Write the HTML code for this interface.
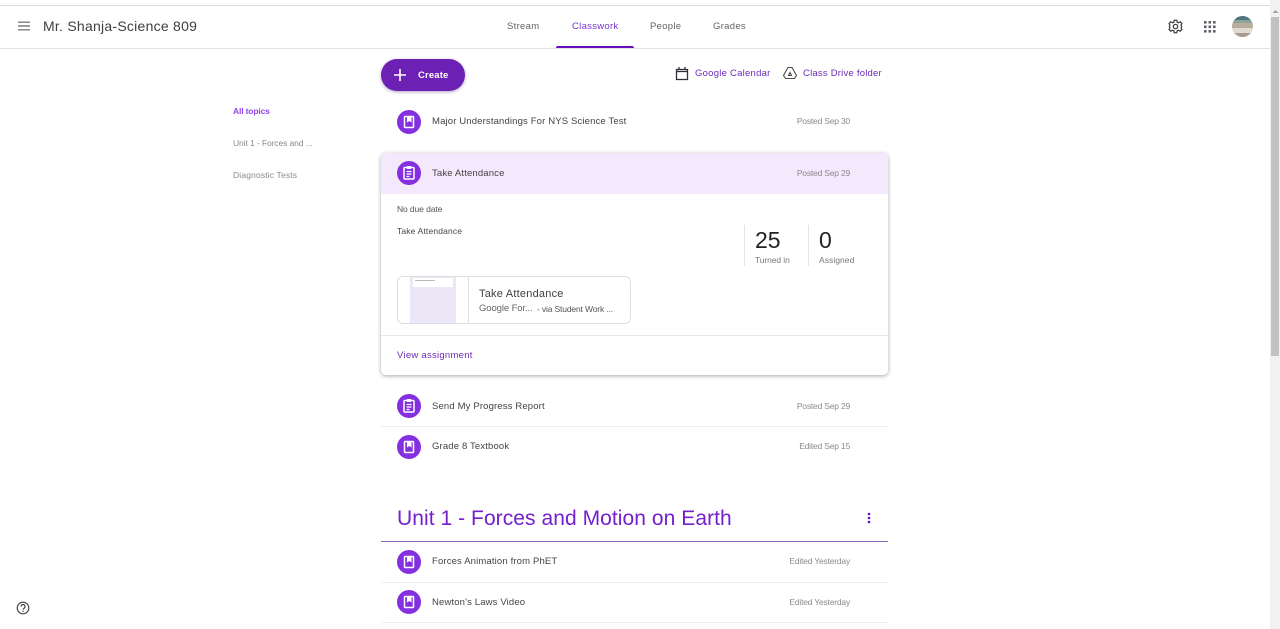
<!DOCTYPE html>
<html><head><meta charset="utf-8"><style>
html,body{margin:0;padding:0;background:#fff;width:1280px;height:629px;overflow:hidden;font-family:"Liberation Sans",sans-serif}
.t{position:absolute;white-space:nowrap;line-height:14px}
.b{position:absolute;background:#e5e5e5}
.ic{position:absolute;width:24px;height:24px;left:397px;border-radius:50%;background:#8430e0}
.ic svg{position:absolute;left:0;top:0}
.title{font-size:9.5px;color:#444;left:432px;letter-spacing:.15px}
.date{font-size:8.5px;color:#8a8a8a;letter-spacing:-.2px;text-align:right;right:430px}
.tab{font-size:9.5px;color:#5f6368;letter-spacing:.3px}
</style></head><body>
<div class="b" style="left:0;top:5px;width:1270px;height:1px;background:#dcdcdc"></div>
<div class="b" style="left:0;top:48px;width:1270px;height:1px;background:#e0e0e0"></div>
<svg style="position:absolute;left:18px;top:21px" width="12" height="10"><path d="M0 1.200h12M0 5h12M0 8.800h12" stroke="#5f6368" stroke-width="1.200"/></svg>
<div class="t" style="left:43px;top:18px;font-size:14px;line-height:17px;color:#3c4043;letter-spacing:.25px">Mr. Shanja-Science 809</div>
<div class="t tab" style="left:507px;top:20px">Stream</div>
<div class="t tab" style="left:572px;top:20px;color:#7b35d0">Classwork</div>
<div class="t tab" style="left:650px;top:20px">People</div>
<div class="t tab" style="left:713px;top:20px">Grades</div>
<div class="b" style="left:556px;top:46px;width:78px;height:2px;background:#6a0fc0;border-radius:2px 2px 0 0"></div>
<svg style="position:absolute;left:1168px;top:19px" width="15" height="15" viewBox="0 0 24 24"><path d="M10 2h4l.6 3 2.300 1 2.600-1.600 2.800 2.800L20.900 9.800l1 2.200v0l-1 2.200 1.400 2.600-2.800 2.800-2.600-1.600-2.300 1-.6 3h-4l-.6-3-2.300-1-2.600 1.600-2.800-2.800 1.400-2.600-1-2.200 1-2.200-1.400-2.600L4.500 4.400l2.600 1.600 2.300-1z" fill="none" stroke="#3c4043" stroke-width="2"/><circle cx="12" cy="12" r="3.500" fill="none" stroke="#3c4043" stroke-width="2"/></svg>
<svg style="position:absolute;left:1204px;top:21px" width="12" height="12" fill="#5f6368"><rect x="0" y="0" width="2.600" height="2.600"/><rect x="4.500" y="0" width="2.600" height="2.600"/><rect x="9" y="0" width="2.600" height="2.600"/><rect x="0" y="4.500" width="2.600" height="2.600"/><rect x="4.500" y="4.500" width="2.600" height="2.600"/><rect x="9" y="4.500" width="2.600" height="2.600"/><rect x="0" y="9" width="2.600" height="2.600"/><rect x="4.500" y="9" width="2.600" height="2.600"/><rect x="9" y="9" width="2.600" height="2.600"/></svg>
<div style="position:absolute;left:1232px;top:16px;width:21px;height:21px;border-radius:50%;overflow:hidden;background:#cfc8bc"><div style="height:4px;background:#4f7580"></div><div style="height:3px;background:#8fa39a"></div><div style="height:5px;background:#b8ad9c"></div><div style="height:5px;background:#e0dbd2"></div><div style="height:4px;background:#a89c8c"></div></div>
<div style="position:absolute;left:1270px;top:0;width:10px;height:629px;background:#f1f1f1"></div>
<div style="position:absolute;left:1271px;top:17px;width:8px;height:339px;background:#c1c1c1"></div>
<svg style="position:absolute;left:1272px;top:9px" width="7" height="5"><path d="M0.500 4L3.500 1 6.500 4z" fill="#a0a0a0"/></svg>
<svg style="position:absolute;left:16px;top:601px" width="14" height="14" viewBox="0 0 14 14"><circle cx="7" cy="7" r="5.800" fill="none" stroke="#3c4043" stroke-width="1.100"/><path d="M5 5.600a2 2 0 1 1 3 1.700c-.7.400-1 .8-1 1.500" fill="none" stroke="#3c4043" stroke-width="1.100"/><circle cx="7" cy="10.300" r=".7" fill="#3c4043"/></svg>
<div class="t" style="left:233px;top:104px;font-size:8.500px;color:#8f45ea;letter-spacing:-.15px;font-weight:bold">All topics</div>
<div class="t" style="left:233px;top:136px;font-size:8.500px;color:#8a8a8a;letter-spacing:-.1px">Unit 1 - Forces and ...</div>
<div class="t" style="left:233px;top:168px;font-size:8.500px;color:#8a8a8a;letter-spacing:.15px">Diagnostic Tests</div>
<div style="position:absolute;left:381px;top:59px;width:84px;height:32px;border-radius:16px;background:#6d20b4;box-shadow:0 1px 3px rgba(60,20,120,.4)"></div>
<svg style="position:absolute;left:393px;top:68px" width="14" height="14"><path d="M7 1v12M1 7h12" stroke="#fff" stroke-width="1.600"/></svg>
<div class="t" style="left:418px;top:69px;font-size:9.500px;color:#fff;font-weight:bold;letter-spacing:.15px">Create</div>
<svg style="position:absolute;left:675px;top:66px" width="14" height="15"><path d="M1.500 3.500h11v10h-11zM1.500 5.500h11M4 1v2.500M10 1v2.500" fill="none" stroke="#2a2f3a" stroke-width="1.300"/></svg>
<div class="t" style="left:695px;top:67px;font-size:9.500px;color:#6b2bb8;letter-spacing:.25px">Google Calendar</div>
<svg style="position:absolute;left:783px;top:66px" width="14" height="14"><path d="M5 1.500h4l4.500 8-2 3h-9l-2-3zM5.500 9.500L7 6.500l1.500 3z" fill="none" stroke="#4a4a4a" stroke-width="1.100"/></svg>
<div class="t" style="left:803px;top:67px;font-size:9.500px;color:#6b2bb8;letter-spacing:.22px">Class Drive folder</div>

<div class="ic" style="top:110px"><svg width="24" height="24"><rect x="7.500" y="6.500" width="9" height="11" rx=".8" fill="none" stroke="#fff" stroke-width="1.500"/><path d="M10 6.500h4.500v6l-2.200-1.500L10 12.500z" fill="#fff"/></svg></div>
<div class="t title" style="top:115px">Major Understandings For NYS Science Test</div>
<div class="t date" style="top:114px">Posted Sep 30</div>

<div style="position:absolute;left:381px;top:153px;width:507px;height:222px;background:#fff;border-radius:5px;box-shadow:0 1px 4px rgba(0,0,0,.35)"></div>
<div style="position:absolute;left:381px;top:153px;width:507px;height:41px;background:#f3e8fc;border-radius:5px 5px 0 0"></div>
<div class="ic" style="top:161px"><svg width="24" height="24"><rect x="7" y="6.500" width="10" height="11.500" rx="1" fill="none" stroke="#fff" stroke-width="1.500"/><path d="M10 5h4v3h-4z" fill="#fff"/><path d="M9.500 10.500h5M9.500 13h5M9.500 15.500h3" stroke="#fff" stroke-width="1.300"/></svg></div>
<div class="t title" style="top:167px">Take Attendance</div>
<div class="t date" style="top:166px">Posted Sep 29</div>
<div class="t" style="left:397px;top:202px;font-size:8.500px;color:#555;letter-spacing:-.1px">No due date</div>
<div class="t" style="left:397px;top:224px;font-size:8.500px;color:#444;letter-spacing:.15px">Take Attendance</div>
<div class="b" style="left:744px;top:225px;width:1px;height:41px"></div>
<div class="b" style="left:808px;top:225px;width:1px;height:41px"></div>
<div class="t" style="left:755px;top:228px;font-size:23px;line-height:24px;color:#222">25</div>
<div class="t" style="left:819px;top:228px;font-size:23px;line-height:24px;color:#222">0</div>
<div class="t" style="left:755px;top:253px;font-size:8.500px;color:#777;letter-spacing:-.1px">Turned in</div>
<div class="t" style="left:819px;top:253px;font-size:8.500px;color:#777;letter-spacing:.05px">Assigned</div>
<div style="position:absolute;left:397px;top:276px;width:232px;height:46px;border:1px solid #dedede;border-radius:6px;overflow:hidden">
<div style="position:absolute;left:12px;top:0;width:46px;height:46px;background:#ece6f6"></div>
<div style="position:absolute;left:15px;top:1px;width:40px;height:9px;background:#fff"></div>
<div style="position:absolute;left:17px;top:3px;width:20px;height:1px;background:#bbb"></div>
<div style="position:absolute;left:70px;top:0;width:1px;height:46px;background:#dedede"></div>
</div>
<div class="t" style="left:479px;top:287px;font-size:11px;color:#3c4043;letter-spacing:.22px">Take Attendance</div>
<div class="t" style="left:479px;top:302px;font-size:9.500px;color:#666;letter-spacing:-.1px">Google For...</div>
<div class="t" style="left:537px;top:302px;font-size:8.500px;color:#555;letter-spacing:-.15px">- via Student Work ...</div>
<div class="b" style="left:381px;top:335px;width:507px;height:1px;background:#e8e8e8"></div>
<div class="t" style="left:397px;top:349px;font-size:9.500px;color:#6b2bb8;letter-spacing:.27px">View assignment</div>

<div class="ic" style="top:394px"><svg width="24" height="24"><rect x="7" y="6.500" width="10" height="11.500" rx="1" fill="none" stroke="#fff" stroke-width="1.500"/><path d="M10 5h4v3h-4z" fill="#fff"/><path d="M9.500 10.500h5M9.500 13h5M9.500 15.500h3" stroke="#fff" stroke-width="1.300"/></svg></div>
<div class="t title" style="top:400px">Send My Progress Report</div>
<div class="t date" style="top:399px">Posted Sep 29</div>
<div class="b" style="left:381px;top:426px;width:507px;height:1px;background:#ececec"></div>
<div class="ic" style="top:435px"><svg width="24" height="24"><rect x="7.500" y="6.500" width="9" height="11" rx=".8" fill="none" stroke="#fff" stroke-width="1.500"/><path d="M10 6.500h4.500v6l-2.200-1.500L10 12.500z" fill="#fff"/></svg></div>
<div class="t title" style="top:440px">Grade 8 Textbook</div>
<div class="t date" style="top:439px">Edited Sep 15</div>

<div class="t" style="left:397px;top:504px;font-size:21px;line-height:29px;color:#7420cc;letter-spacing:.06px">Unit 1 - Forces and Motion on Earth</div>
<svg style="position:absolute;left:866px;top:511px" width="6" height="14" fill="#6a0fc0"><circle cx="3" cy="3" r="1.300"/><circle cx="3" cy="7" r="1.300"/><circle cx="3" cy="11" r="1.300"/></svg>
<div class="b" style="left:381px;top:541px;width:507px;height:1px;background:#8c62c0"></div>
<div class="ic" style="top:550px"><svg width="24" height="24"><rect x="7.500" y="6.500" width="9" height="11" rx=".8" fill="none" stroke="#fff" stroke-width="1.500"/><path d="M10 6.500h4.500v6l-2.200-1.500L10 12.500z" fill="#fff"/></svg></div>
<div class="t title" style="top:555px">Forces Animation from PhET</div>
<div class="t date" style="top:554px">Edited Yesterday</div>
<div class="b" style="left:381px;top:582px;width:507px;height:1px;background:#ececec"></div>
<div class="ic" style="top:590px"><svg width="24" height="24"><rect x="7.500" y="6.500" width="9" height="11" rx=".8" fill="none" stroke="#fff" stroke-width="1.500"/><path d="M10 6.500h4.500v6l-2.200-1.500L10 12.500z" fill="#fff"/></svg></div>
<div class="t title" style="top:596px">Newton's Laws Video</div>
<div class="t date" style="top:595px">Edited Yesterday</div>
<div class="b" style="left:381px;top:622px;width:507px;height:1px;background:#ececec"></div>
</body></html>
